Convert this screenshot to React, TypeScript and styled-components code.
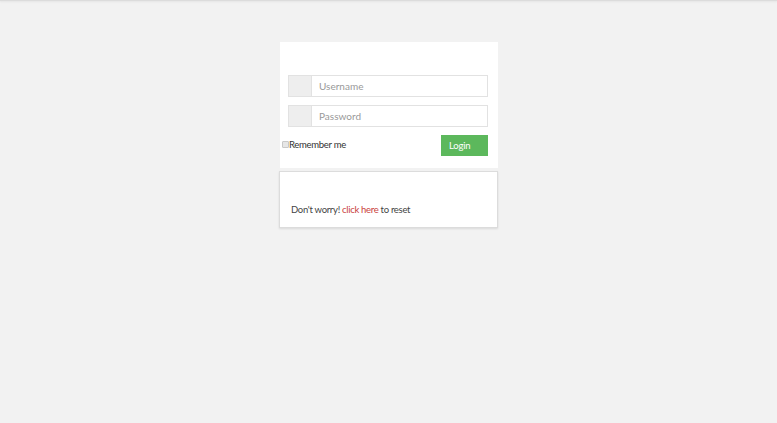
import React, { useState } from "react";
import styled, { createGlobalStyle } from "styled-components";

const GlobalStyle = createGlobalStyle`
  html, body {
    margin: 0;
    padding: 0;
    background: #f2f2f2;
    font-family: Lato, "Open Sans", Arial, sans-serif;
    color: #333;
  }
`;

const TopBar = styled.div`
  height: 1px;
  background: #dcdcdc;
  box-shadow: 0 1px 2px rgba(0, 0, 0, 0.08);
`;

const Page = styled.div`
  display: flex;
  justify-content: center;
  padding-top: 41px;
  min-height: 381px;
`;

const Column = styled.div`
  width: 219px;
  display: flex;
  flex-direction: column;
  gap: 3px;
`;

const LoginCard = styled.form`
  margin-left: 1px;
  background: #fff;
  padding: 33px 10px 12px 8px;
  display: flex;
  flex-direction: column;
  gap: 8px;
`;

const InputGroup = styled.div`
  display: flex;
  height: 22px;
  border: 1px solid #e2e2e2;
  box-sizing: border-box;
  background: #fff;
`;

const Addon = styled.span`
  width: 22px;
  background: #eee;
  border-right: 1px solid #e2e2e2;
`;

const Field = styled.input`
  flex: 1;
  min-width: 0;
  border: none;
  outline: none;
  padding: 0 7px;
  font-family: inherit;
  font-size: 10px;
  color: #555;
  background: transparent;
  &::placeholder {
    color: #999;
  }
`;

const ActionRow = styled.div`
  display: flex;
  align-items: center;
  justify-content: space-between;
  margin-left: -6px;
`;

const Remember = styled.label`
  display: flex;
  align-items: center;
  font-size: 9.5px;
  letter-spacing: -0.3px;
  color: #333;
  margin-top: -2px;
`;

const Check = styled.input`
  width: 7px;
  height: 7px;
  margin: 0;
  appearance: none;
  background: #e6e6e6;
  border: 1px solid #c8c8c8;
  border-radius: 1px;
`;

const LoginButton = styled.button`
  width: 47px;
  height: 21px;
  background: #5cb85c;
  color: #fff;
  border: none;
  padding: 0 0 0 8px;
  text-align: left;
  font-family: inherit;
  font-size: 9.5px;
  letter-spacing: -0.2px;
  cursor: pointer;
`;

const ForgotCard = styled.div`
  background: #fff;
  border: 1px solid #dcdcdc;
  box-shadow: 0 1px 2px rgba(0, 0, 0, 0.1);
  height: 57px;
  box-sizing: border-box;
  padding: 32px 11px 0;
  font-size: 9.5px;
  letter-spacing: -0.3px;
  color: #444;
`;

const Link = styled.a`
  color: #c9413d;
  text-decoration: none;
`;

const App: React.FC = () => {
  const [username, setUsername] = useState("");
  const [password, setPassword] = useState("");

  return (
    <>
      <GlobalStyle />
      <TopBar />
      <Page>
        <Column>
          <LoginCard onSubmit={(e) => e.preventDefault()}>
            <InputGroup>
              <Addon />
              <Field
                placeholder="Username"
                value={username}
                onChange={(e) => setUsername(e.target.value)}
              />
            </InputGroup>
            <InputGroup>
              <Addon />
              <Field
                type="password"
                placeholder="Password"
                value={password}
                onChange={(e) => setPassword(e.target.value)}
              />
            </InputGroup>
            <ActionRow>
              <Remember>
                <Check type="checkbox" />
                Remember me
              </Remember>
              <LoginButton type="submit">Login</LoginButton>
            </ActionRow>
          </LoginCard>
          <ForgotCard>
            Don't worry! <Link href="#">click here</Link> to reset
          </ForgotCard>
        </Column>
      </Page>
    </>
  );
};

export default App;
